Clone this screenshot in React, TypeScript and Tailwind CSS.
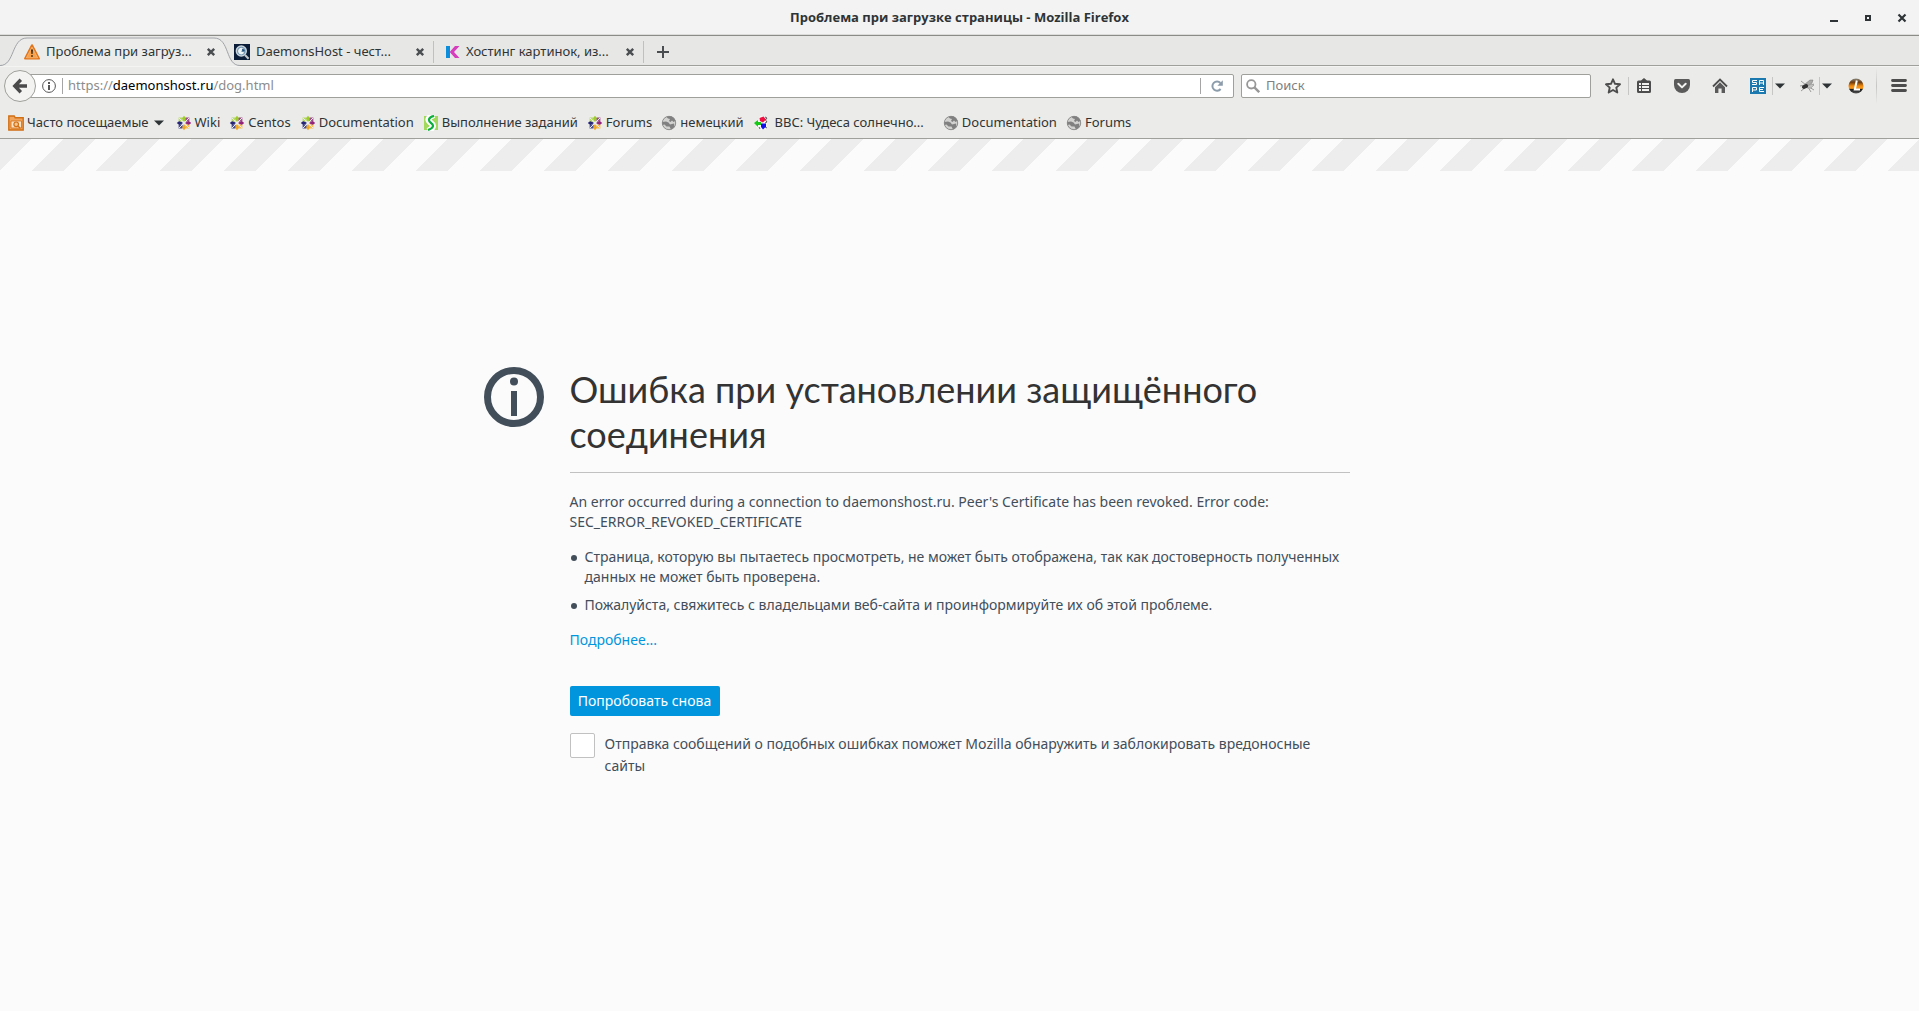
import type { ReactNode } from "react";

function WarningIcon() {
  return (
    <svg viewBox="0 0 16 16" className="size-4 shrink-0">
      <path d="M8 1.2 15 14.6H1Z" fill="#f8a04a" stroke="#e2741a" strokeWidth="2" strokeLinejoin="round" />
      <path d="M8 3.2 13.6 13.8H2.4Z" fill="none" stroke="#fcc88c" strokeWidth=".7" />
      <path d="M7 5.5h2l-.4 4.6H7.4ZM7.1 11.2h1.8v1.6H7.1Z" fill="#3a2c1a" />
    </svg>
  );
}

function DaemonIcon() {
  return (
    <svg viewBox="0 0 16 16" className="size-4 shrink-0">
      <path d="M0 0h16v16H0Z" fill="#0a1c38" />
      <circle cx="7.3" cy="7" r="5" fill="#6f93b0" stroke="#c9d3dc" strokeWidth="1.4" />
      <path d="M9.5 4.6A3.3 3.3 0 1 0 10.3 8.6L7 7.6Z" fill="#eef3f6" />
      <path d="M8 4.5 11 6.5 8.5 7.5Z" fill="#1d4c78" />
      <path d="m11 11 3.6 3.8" stroke="#c3c7ca" strokeWidth="2" />
    </svg>
  );
}

function KIcon() {
  return (
    <svg viewBox="0 0 16 16" className="size-4 shrink-0">
      <path d="M2 2h4v12H2Z" fill="#0d8edb" />
      <path d="M11 2h4.5L10 8l5.5 6H11L5.7 8Z" fill="#d63cbd" />
    </svg>
  );
}

function CloseIcon() {
  return (
    <svg viewBox="0 0 10 10" className="size-2.5">
      <path d="m1.8 1.8 6.4 6.4m0-6.4L1.8 8.2" stroke="#4a4e50" strokeWidth="2.4" />
    </svg>
  );
}

function FolderIcon() {
  return (
    <svg viewBox="0 0 16 16" className="size-4 shrink-0">
      <path d="M.8 1h5.4l1 1.8h8V15H.8Z" fill="#f0a45c" stroke="#d16f14" strokeWidth="1.4" />
      <path d="M3 6h10.5v7H3Z" fill="#fbe3c8" stroke="#d16f14" strokeWidth=".8" />
      <circle cx="8.2" cy="9.3" r="2.3" fill="#f7c58f" stroke="#d16f14" strokeWidth="1.2" />
      <path d="m10 11 2.2 2.2" stroke="#d16f14" strokeWidth="1.4" />
    </svg>
  );
}

function CentosIcon() {
  return (
    <svg viewBox="0 0 16 16" className="size-4 shrink-0">
      <path d="M8 .8 10.3 3.5 8 7 5.7 3.5Z" fill="#9ccd2a" />
      <path d="M15.2 8 12.5 10.3 9 8l3.5-2.3Z" fill="#932279" />
      <path d="M8 15.2 5.7 12.5 8 9l2.3 3.5Z" fill="#efa724" />
      <path d="M.8 8l2.7-2.3L7 8l-3.5 2.3Z" fill="#262577" />
      <path d="M2.6 2.6h3.6l.6 4.2-4.2-.6Z" fill="#b7d968" />
      <path d="M13.4 2.6v3.6l-4.2.6.6-4.2Z" fill="#a14f8c" />
      <path d="M13.4 13.4H9.8l-.6-4.2 4.2.6Z" fill="#f3bc55" />
      <path d="M2.6 13.4V9.8l4.2-.6-.6 4.2Z" fill="#4a4d92" />
      <path d="m3 3 10 10m0-10-10 10" stroke="#ebebe9" strokeWidth="1" />
    </svg>
  );
}

function TasksIcon() {
  return (
    <svg viewBox="0 0 16 16" className="size-4 shrink-0">
      <path d="M1 1h14v14H1Z" fill="#a2d85c" />
      <path d="M11 0C3 3 5 6 8 8s3 5-3 8" fill="none" stroke="#fff" strokeWidth="6" />
      <path d="M11 1C5 2 5 6 8 8s3 5-3 7" fill="none" stroke="#0cae3e" strokeWidth="2.2" />
    </svg>
  );
}

function GlobeIcon() {
  return (
    <svg viewBox="0 0 16 16" className="size-4 shrink-0">
      <circle cx="8" cy="8" r="7" fill="#d2d2d1" />
      <path d="M8 1A7 7 0 0 1 14.6 5.800L12.500 7 11 5.500 9.500 7 8 6 9 4 7 3.500 5.500 2Z" fill="#808080" />
      <path d="M1.200 7 5 6.500 7.500 7.500 9 9.500 13 8.500 13.500 12 10 14.500 8.500 11.500 5.500 11.500 3.500 9.500 1.400 10Z" fill="#808080" />
      <circle cx="8" cy="8" r="6.700" fill="none" stroke="#868686" strokeWidth=".9" />
    </svg>
  );
}

function BbcIcon() {
  return (
    <svg viewBox="0 0 16 16" className="size-4 shrink-0">
      <path d="M7 1 14 2v12l-6 1-5-3Z" fill="#f8f8f8" />
      <path d="M1 8l4-3v2h3v3H5v2Z" fill="#18c818" />
      <path d="M6.500 3l4-1.500 2.500 3-3 3-3-1.500Z" fill="#ee1040" />
      <path d="M8 8.500h5v3l-3 3-2-2.500Z" fill="#1010e8" />
      <path d="m12 2 2 1-1.5 2L14 7l-2 1M12 12l2 1M6 12l1 2" fill="none" stroke="#333" strokeWidth=".8" />
    </svg>
  );
}

function Caret() {
  return (
    <svg viewBox="0 0 10 6" className="h-1.5 w-2.5 shrink-0">
      <path d="M0 .5h10L5 5.5Z" fill="#2e3436" />
    </svg>
  );
}

const tabs = [
  { title: "Проблема при загруз...", icon: <WarningIcon />, active: true },
  { title: "DaemonsHost - чест...", icon: <DaemonIcon />, active: false },
  { title: "Хостинг картинок, из...", icon: <KIcon />, active: false },
];

const bookmarks = [
  { title: "Wiki", icon: <CentosIcon /> },
  { title: "Centos", icon: <CentosIcon /> },
  { title: "Documentation", icon: <CentosIcon /> },
  { title: "Выполнение заданий", icon: <TasksIcon /> },
  { title: "Forums", icon: <CentosIcon /> },
  { title: "немецкий", icon: <GlobeIcon /> },
  { title: "BBC: Чудеса солнечно...", icon: <BbcIcon />, wide: true },
  { title: "Documentation", icon: <GlobeIcon /> },
  { title: "Forums", icon: <GlobeIcon /> },
];

function TitleBar() {
  return (
    <header className="grid h-9 grid-cols-[1fr_auto_1fr] items-center border-b border-[#8b8b87] bg-[#f3f3f3] shadow-[inset_0_-1px_0_#dcdcda]">
      <h1 className="col-start-2 font-['Open_Sans',sans-serif] font-bold">Проблема при загрузке страницы - Mozilla Firefox</h1>
      <div className="flex justify-end gap-6 pr-3">
        <button aria-label="Свернуть">
          <svg viewBox="0 0 10 10" className="size-2.5"><path d="M1 7h8v2H1Z" fill="#2e3436" /></svg>
        </button>
        <button aria-label="Развернуть">
          <svg viewBox="0 0 10 10" className="size-2.5"><path d="M3 3h4v4H3Z" fill="none" stroke="#2e3436" strokeWidth="2" /></svg>
        </button>
        <button aria-label="Закрыть">
          <svg viewBox="0 0 10 10" className="size-2.5"><path d="m1.5 1.5 7 7m0-7-7 7" stroke="#2e3436" strokeWidth="2.2" /></svg>
        </button>
      </div>
    </header>
  );
}

function TabStrip() {
  return (
    <div className="relative flex h-[30px] items-center border-b border-[#9f9f9b] bg-[#e7e7e5] pt-0.5 pl-[14px]">
      {/* outline of the selected tab */}
      <svg viewBox="0 0 246 30" className="absolute top-0 left-0 h-[30px] w-[246px]">
        <path d="M0 29.5C15 29.5 11 2 27 2H214C230 2 225 29.5 240 29.5V30H0Z" fill="#ececea" />
        <path d="M0 29.5C15 29.5 11 2 27 2H214C230 2 225 29.5 240 29.5" fill="none" stroke="#a0a4a8" />
      </svg>
      {tabs.map((tab) => (
        <div
          key={tab.title}
          className={`relative flex h-[22px] w-[210px] items-center pr-2 pl-2.5 ${tab.active ? "" : "border-r border-[#c0c0be]"}`}
        >
          {tab.icon}
          <span className="ml-1.5 flex-1 whitespace-nowrap">{tab.title}</span>
          <button aria-label="Закрыть вкладку"><CloseIcon /></button>
        </div>
      ))}
      <button aria-label="Новая вкладка" className="ml-[13px]">
        <svg viewBox="0 0 12 12" className="size-3"><path d="M5 0h2v5h5v2H7v5H5V7H0V5h5Z" fill="#4a4e50" /></svg>
      </button>
    </div>
  );
}

function ToolButton({ label, children }: { label: string; children: ReactNode }) {
  return <button aria-label={label} className="shrink-0">{children}</button>;
}

function Separator() {
  return <span className="h-[18px] w-px shrink-0 bg-[#c6c6c4]" />;
}

function NavBar() {
  return (
    <div className="flex h-10 items-center bg-[#ebebe9] pr-3 pl-1 shadow-[inset_0_1px_0_#f4f4f3]">
      <button aria-label="Назад" className="relative z-10 flex size-8 shrink-0 items-center justify-center rounded-full border border-[#9f9f9b] bg-[#f3f3f2]">
        <svg viewBox="0 0 16 16" className="size-4">
          <path d="M8.8 1.8 2.8 8l6 6.2M3.5 8H15" fill="none" stroke="#4a4a4a" strokeWidth="3.4" />
        </svg>
      </button>
      <div className="-ml-2 flex h-6 flex-1 items-center rounded-r-xs border border-[#9f9f9b] bg-white pl-[13px]">
        <svg viewBox="0 0 14 14" className="size-3.5 shrink-0">
          <circle cx="7" cy="7" r="6.4" fill="none" stroke="#555" />
          <path d="M6 3h2v2H6ZM6 6h2v5H6Z" fill="#555" />
        </svg>
        <span className="ml-1.5 h-4 w-px bg-[#a5a5a5]" />
        <div className="relative ml-[5px] h-full flex-1">
          <input
            aria-label="Адрес"
            defaultValue="https://daemonshost.ru/dog.html"
            className="h-full w-full text-transparent caret-black outline-none"
          />
          {/* the host is drawn darker than the rest of the address */}
          <span aria-hidden="true" className="pointer-events-none absolute inset-0 flex items-center text-[#8c8c8c]">
            https://<span className="text-black">daemonshost.ru</span>/dog.html
          </span>
        </div>
        <span className="h-4 w-px bg-[#a5a5a5]" />
        <button aria-label="Обновить" className="mx-2.5">
          <svg viewBox="0 0 12 12" className="size-3">
            <path d="M9.6 9A4.6 4.6 0 1 1 9.4 3" fill="none" stroke="#8c9cab" strokeWidth="2" />
            <path d="M11.8.3v5.4H6.4Z" fill="#8c9cab" />
          </svg>
        </button>
      </div>
      <label className="ml-[7px] flex h-6 w-[350px] items-center rounded-xs border border-[#9f9f9b] bg-white pl-1">
        <svg viewBox="0 0 14 14" className="size-3.5 shrink-0">
          <circle cx="5.3" cy="5.3" r="4.2" fill="none" stroke="#979797" strokeWidth="1.8" />
          <path d="m8.4 8.4 4.8 4.8" stroke="#979797" strokeWidth="2.4" />
        </svg>
        <input aria-label="Поиск" placeholder="Поиск" className="ml-1.5 w-full outline-none placeholder:text-[#808080]" />
      </label>

      <div className="ml-3.5 flex items-center">
        <ToolButton label="Добавить в закладки">
          <svg viewBox="0 0 16 16" className="size-4">
            <path d="m8 1.3 2 4.500 5 .5-3.700 3.300 1 4.900L8 12l-4.300 2.500 1-4.900L1 6.300l5-.5Z" fill="none" stroke="#4d4d4d" strokeWidth="1.9" strokeLinejoin="round" />
          </svg>
        </ToolButton>
        <span className="w-[7px]" />
        <Separator />
        <span className="w-[7px]" />
        <ToolButton label="Показать закладки">
          <svg viewBox="0 0 16 16" className="size-4">
            <path d="M2.500 2.500H5L8 0l3 2.500h2.500Q15 2.500 15 4v9.500Q15 15 13.500 15h-11Q1 15 1 13.500V4Q1 2.500 2.500 2.500Z" fill="#4d4d4d" />
            <path d="M3 5h2v2H3ZM6 5h7v2H6ZM3 8h2v2H3ZM6 8h7v2H6ZM3 11h2v2H3ZM6 11h7v2H6Z" fill="#f3f3f2" />
          </svg>
        </ToolButton>
        <span className="w-[22px]" />
        <ToolButton label="Сохранить в Pocket">
          <svg viewBox="0 0 16 16" className="size-4">
            <path d="M1.5 1h13Q16 1 16 2.6V7A8 8 0 0 1 0 7V2.6Q0 1 1.5 1Z" fill="#5a5a5a" />
            <path d="m4.3 5.8 3.7 3.6 3.7-3.6" fill="none" stroke="#f3f3f2" strokeWidth="2" strokeLinecap="round" strokeLinejoin="round" />
          </svg>
        </ToolButton>
        <span className="w-[22px]" />
        <ToolButton label="Домой">
          <svg viewBox="0 0 16 16" className="size-4">
            <path d="m1 8.5 7-7 7 7" fill="none" stroke="#4d4d4d" strokeWidth="1.8" />
            <path d="M8 4.3 13 9.3V15H9.6v-4.5H6.4V15H3V9.3Z" fill="#5a5a5a" />
          </svg>
        </ToolButton>
        <span className="w-[22px]" />
        <ToolButton label="Sape">
          <svg viewBox="0 0 16 16" className="size-4">
            <path d="M0 0h16v16H0Z" fill="#1b79b0" />
            <path d="M7 2.5H2.5v2h4v2H2M9.5 7V2.5h4V7M9.5 5h4M2.5 14V9.5h4v2.5h-4M14 9.5H9.5v4H14M9.5 11.5H13" fill="none" stroke="#fff" strokeWidth="1" />
          </svg>
        </ToolButton>
        <span className="w-1.5" />
        <Separator />
        <button aria-label="Меню Sape" className="ml-0.5"><Caret /></button>
        <span className="w-3.5" />
        <ToolButton label="Муха">
          <svg viewBox="0 0 16 16" className="size-4">
            <path d="m2 3 5 4M1 8l5-1M2 13l5-4M15 6l-5 2M15 12l-5-3M12 14 9 9" fill="none" stroke="#777" strokeWidth=".7" />
            <path d="m6 6 5-4h3l-1 3-5 4Z" fill="#aaaaa8" stroke="#777" strokeWidth=".5" />
            <path d="m8 8 5-2 2 1-3 3H8Z" fill="#c0c0be" stroke="#888" strokeWidth=".5" />
            <ellipse cx="6" cy="8.5" rx="3.2" ry="2" fill="#333" transform="rotate(-25 6 8.5)" />
          </svg>
        </ToolButton>
        <span className="w-1" />
        <Separator />
        <button aria-label="Меню расширения" className="ml-0.5"><Caret /></button>
        <span className="w-4" />
        <ToolButton label="Расширение L">
          <svg viewBox="0 0 16 16" className="size-4">
            <defs>
              <linearGradient id="orb" x1="0" y1="0" x2="0" y2="1">
                <stop offset="0" stopColor="#8a8a80" />
                <stop offset=".25" stopColor="#6a3a10" />
                <stop offset=".5" stopColor="#f08a10" />
                <stop offset=".66" stopColor="#f89a20" />
                <stop offset=".7" stopColor="#151515" />
                <stop offset="1" stopColor="#555" />
              </linearGradient>
            </defs>
            <circle cx="8" cy="8" r="7.5" fill="url(#orb)" />
            <path d="M8.8 2.5 6.8 11.5H12" fill="none" stroke="#fff" strokeWidth="2" />
          </svg>
        </ToolButton>
        <span className="w-3" />
        <span className="h-9 w-px bg-linear-to-b from-transparent via-[#c6c6c4] to-transparent" />
        <span className="w-3.5" />
        <ToolButton label="Открыть меню">
          <svg viewBox="0 0 16 16" className="size-4">
            <path d="M1.500 2.500h13M1.500 7.500h13M1.500 12.500h13" stroke="#4d4d4d" strokeWidth="2.800" strokeLinecap="round" />
          </svg>
        </ToolButton>
      </div>
    </div>
  );
}

function BookmarksBar() {
  return (
    <nav className="flex h-[33px] items-center gap-[9px] border-b border-[#9f9f9b] bg-[#ebebe9] pt-0.5 pl-2 whitespace-nowrap">
      <button className="mr-[3px] flex items-center gap-[3px]">
        <FolderIcon />
        <span className="mr-0.5">Часто посещаемые</span>
        <Caret />
      </button>
      {bookmarks.map((b, i) => (
        <a key={i} href="#" className={`flex items-center ${b.wide ? "gap-1.5 pr-2.5" : "gap-[3px]"}`}>
          {b.icon}
          {b.title}
        </a>
      ))}
    </nav>
  );
}

function ErrorPage() {
  return (
    <main className="flex-1 bg-[#fbfbfb] text-sm text-[#424e5a]">
      <div className="h-8 bg-[linear-gradient(135deg,#ededed_33.33%,#fbfbfb_33.33%,#fbfbfb_66.66%,#ededed_66.66%)] bg-size-[64px_32px]" />
      <div className="grid grid-cols-[1fr_minmax(0,780px)_1fr] pt-[196px]">
        <svg viewBox="0 0 60 60" className="mr-[26px] size-[60px] justify-self-end">
          <circle cx="30" cy="30" r="26.5" fill="none" stroke="#424e5a" strokeWidth="7" />
          <circle cx="30" cy="14.5" r="4" fill="#424e5a" />
          <path d="M27 24h6v25h-6Z" fill="#424e5a" />
        </svg>
        <div>
          <h2 className="border-b border-[#c1c1c1] pb-[15px] font-[Lato,sans-serif] text-4xl leading-[45px] text-[#333]">
            Ошибка при установлении защищённого соединения
          </h2>
          <p className="mt-[19px] w-[720px] leading-5">
            An error occurred during a connection to daemonshost.ru. Peer&apos;s Certificate has been revoked. Error code:{" "}
            SEC_ERROR_REVOKED_CERTIFICATE
          </p>
          <ul className="mt-[15px] leading-5">
            <li className="flex gap-2">
              <span className="mt-2 ml-px size-1.5 shrink-0 rounded-full bg-[#424e5a]" />
              Страница, которую вы пытаетесь просмотреть, не может быть отображена, так как достоверность полученных данных не
              может быть проверена.
            </li>
            <li className="mt-2 flex gap-2">
              <span className="mt-2 ml-px size-1.5 shrink-0 rounded-full bg-[#424e5a]" />
              Пожалуйста, свяжитесь с владельцами веб-сайта и проинформируйте их об этой проблеме.
            </li>
          </ul>
          <p className="mt-[15px] leading-5">
            <a href="#" className="text-[#0095dd]">Подробнее...</a>
          </p>
          <button className="mt-9 h-[30px] w-[150px] rounded-xs bg-[#0095dd] text-white">Попробовать снова</button>
          <div className="mt-[17px] flex items-start gap-2.5">
            <input
              id="report"
              type="checkbox"
              className="size-[25px] shrink-0 appearance-none rounded-xs border border-[#c1c1c1] bg-white checked:bg-[#0095dd]"
            />
            <label htmlFor="report" className="w-[720px] leading-[22px]">
              Отправка сообщений о подобных ошибках поможет Mozilla обнаружить и заблокировать вредоносные сайты
            </label>
          </div>
        </div>
      </div>
    </main>
  );
}

export default function App() {
  return (
    <div className="flex min-h-screen flex-col font-['Noto_Sans',sans-serif] text-[13px] text-[#2e3436]">
      <TitleBar />
      <TabStrip />
      <NavBar />
      <BookmarksBar />
      <ErrorPage />
    </div>
  );
}
